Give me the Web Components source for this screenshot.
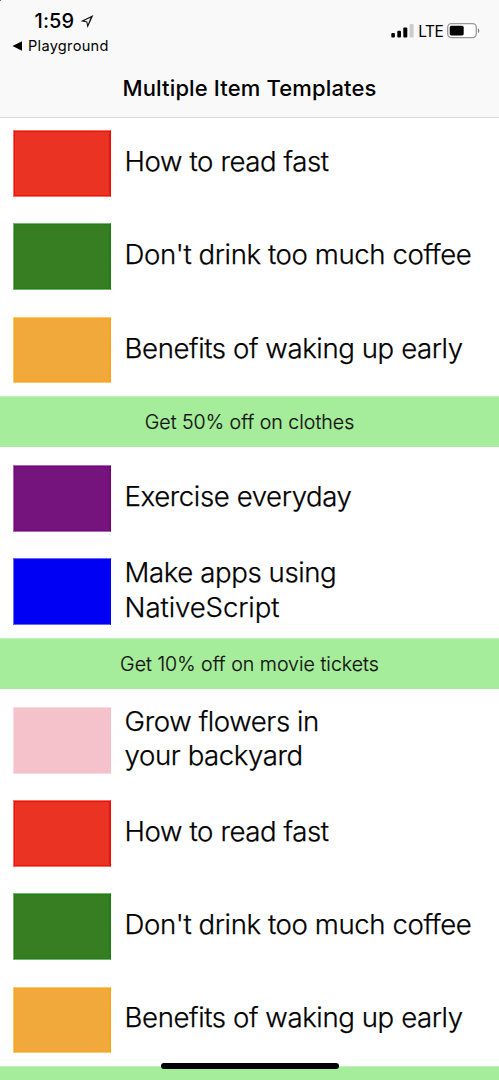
<!DOCTYPE html>
<html lang="en">
<head>
<meta charset="utf-8">
<title>Multiple Item Templates</title>
<style>
html, body { margin: 0; height: 100%; overflow: hidden; background: #fff; }
body { font-family: Inter, "Liberation Sans", sans-serif; color: #000; }
</style>
</head>
<body>
<app-screen>
  <status-bar slot="top"></status-bar>
  <action-bar slot="top">Multiple Item Templates</action-bar>
  <list-item color="#ea3323" edge="#ec1408">How to read fast</list-item>
  <list-item color="#377e22" edge="#208016">Don't drink too much coffee</list-item>
  <list-item color="#f2a93c" edge="#f7a51a">Benefits of waking up early</list-item>
  <ad-banner>Get 50% off on clothes</ad-banner>
  <list-item color="#75147c" edge="#75067c">Exercise everyday</list-item>
  <list-item color="#0000f5" edge="#0000f5">Make apps using<br><span style="letter-spacing:-.1px">NativeScript</span></list-item>
  <ad-banner>Get 10% off on movie tickets</ad-banner>
  <list-item color="#f5c2cb" edge="#f6c1ca">Grow flowers in<br>your backyard</list-item>
  <list-item color="#ea3323" edge="#ec1408">How to read fast</list-item>
  <list-item color="#377e22" edge="#208016">Don't drink too much coffee</list-item>
  <list-item color="#f2a93c" edge="#f7a51a">Benefits of waking up early</list-item>
  <ad-banner></ad-banner>
</app-screen>
<script>
function define(name, html, init) {
  customElements.define(name, class extends HTMLElement {
    constructor() {
      super();
      this.attachShadow({ mode: "open" }).innerHTML = html;
    }
    connectedCallback() { if (init) init(this); }
  });
}

define("status-bar", `
<style>
:host { display: flex; justify-content: space-between; height: 59px; box-sizing: border-box; }
.left { padding: 10px 0 0 12px; }
.clock { display: flex; align-items: center; padding-left: 22.5px; height: 22px; font-size: 20px; font-weight: 500; letter-spacing: .1px; gap: 6px; }
.back { display: flex; align-items: center; gap: 6px; height: 27px; font-size: 14.6px; letter-spacing: .28px; }
.right { display: flex; align-items: center; height: 20px; padding: 21px 19.2px 0 0; font-size: 15.5px; letter-spacing: -.5px; }
.right span { padding: 0 3.5px 0 4px; }
svg { display: block; }
</style>
<div class="left">
  <div class="clock"><span>1:59</span><svg width="14" height="15" viewBox="0 0 14 15"><path fill-rule="evenodd" d="M13.4 1 7.5 14 6.4 8.3.6 7.3zM10.5 3.7 4.3 6.8l3 .6.6 2.9z" fill="#111"/></svg></div>
  <div class="back"><svg width="10" height="10" viewBox="0 0 10 10"><path d="M.5 5 10 .2v9.6z"/></svg><span>Playground</span></div>
</div>
<div class="right">
  <svg width="23" height="14" viewBox="0 0 23 14"><rect x=".3" y="9" width="3.6" height="4.5" rx="1"/><rect x="6.3" y="6.7" width="3.7" height="6.8" rx="1"/><rect x="12.3" y="3.5" width="4" height="10" rx="1"/><rect x="18.6" y="0" width="4" height="13.5" rx="1" fill="#ccc"/></svg>
  <span>LTE</span>
  <svg width="33" height="16" viewBox="0 0 33 16"><rect x=".7" y=".7" width="28.6" height="13.9" rx="3.8" fill="#fff" stroke="#999" stroke-width="1.3"/><rect x="2.7" y="2.8" width="14" height="9.6" rx="1.6"/><path d="M31 5.2c1.7.9 1.7 4 0 4.9z" fill="#777"/></svg>
</div>`);

define("action-bar", `
<style>
:host { display: flex; align-items: center; justify-content: center; height: 58px; border-bottom: 1px solid #dcdcdc; font-size: 22px; font-weight: 500; letter-spacing: .14px; }
</style><span><slot></slot></span>`);

define("list-item", `
<style>
:host { display: flex; flex: none; align-items: center; height: 93.1px; box-sizing: border-box; padding-left: 13.3px; gap: 13.3px; }
.swatch { flex: none; width: 98px; height: 66.5px; box-sizing: border-box; border: 1px solid color-mix(in srgb, var(--edge) 60%, white); border-right-color: var(--edge); background: var(--fill); box-shadow: inset 0 0 0 1px var(--edge); }
.text { font-size: 27.6px; line-height: 34.6px; font-weight: 300; -webkit-text-stroke: .25px #000; letter-spacing: -.41px; white-space: nowrap; padding-bottom: 4px; }
</style><div class="swatch"></div><div class="text"><slot></slot></div>`, el => {
  el.style.setProperty("--fill", el.getAttribute("color"));
  el.style.setProperty("--edge", el.getAttribute("edge"));
});

define("ad-banner", `
<style>
:host { display: flex; flex: none; align-items: center; justify-content: center; height: 50.3px; box-sizing: border-box; margin-bottom: 5.4px; border-top: 1px solid #c0f2b8; background: #a6ed9b; color: #111; font-size: 19.6px; font-weight: 300; -webkit-text-stroke: .2px #111; letter-spacing: 0; }
</style><span><slot></slot></span>`);

define("home-indicator", `
<style>
:host { display: block; position: absolute; left: 161px; bottom: 11px; width: 178px; height: 6px; border-radius: 3px; background: #000; }
</style>`);

define("app-screen", `
<style>
:host { display: flex; flex-direction: column; position: relative; width: 499px; height: 1080px; overflow: hidden; background: #fff; }
header { flex: none; background: linear-gradient(#666, #666) 0 0 / 1px 1px no-repeat #f9f9f9; height: 117.1px; }
main { display: flex; flex-direction: column; flex: 1; min-height: 0; }
</style>
<header><slot name="top"></slot></header>
<main><slot></slot></main>
<home-indicator></home-indicator>`);
</script>
</body>
</html>
